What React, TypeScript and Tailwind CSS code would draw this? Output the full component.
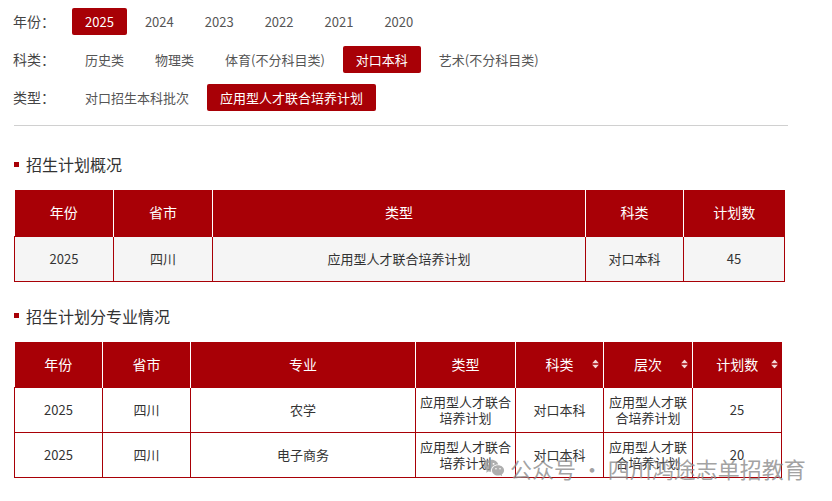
import { RiWechatFill } from "react-icons/ri";

const RED = "bg-[#a80006]";

const filters = [
  {
    label: "年份：",
    items: ["2025", "2024", "2023", "2022", "2021", "2020"],
    active: "2025",
  },
  {
    label: "科类：",
    items: ["历史类", "物理类", "体育(不分科目类)", "对口本科", "艺术(不分科目类)"],
    active: "对口本科",
  },
  {
    label: "类型：",
    items: ["对口招生本科批次", "应用型人才联合培养计划"],
    active: "应用型人才联合培养计划",
  },
];

const SortIcon = () => (
  <span className="absolute right-[4px] top-1/2 -translate-y-1/2 flex flex-col items-center gap-[1px]">
    <svg width="7" height="4" viewBox="0 0 7 4">
      <path d="M3.5 0 L7 4 L0 4 Z" fill="#f3d6d6" />
    </svg>
    <svg width="7" height="4" viewBox="0 0 7 4">
      <path d="M0 0 L7 0 L3.5 4 Z" fill="#f3d6d6" />
    </svg>
  </span>
);

const SectionTitle = ({ text, className }: { text: string; className: string }) => (
  <div className={`flex items-center pl-[14px] ${className}`}>
    <span className="w-[5px] h-[5px] bg-[#a80006] mr-[7px]" />
    <span className="text-[16px] leading-[24px] text-[#333]">{text}</span>
  </div>
);

const summaryCols = [
  { title: "年份", w: 99 },
  { title: "省市", w: 99 },
  { title: "类型", w: 373 },
  { title: "科类", w: 98 },
  { title: "计划数", w: 101 },
];

const majorCols = [
  { title: "年份", w: 88, sort: false },
  { title: "省市", w: 88, sort: false },
  { title: "专业", w: 225, sort: false },
  { title: "类型", w: 100, sort: false },
  { title: "科类", w: 88, sort: true },
  { title: "层次", w: 89, sort: true },
  { title: "计划数", w: 89, sort: true },
];

const majorRows = [
  ["2025", "四川", "农学", "应用型人才联合培养计划", "对口本科", "应用型人才联合培养计划", "25"],
  ["2025", "四川", "电子商务", "应用型人才联合培养计划", "对口本科", "应用型人才联合培养计划", "20"],
];

export default function App() {
  return (
    <div
      className="relative w-[832px] h-[501px] overflow-hidden bg-white"
      style={{ fontFamily: '"Noto Sans CJK SC", "Noto Sans", sans-serif' }}
    >
      {/* Filters */}
      <div className="pt-[8px] flex flex-col gap-[11px]">
        {filters.map((f) => (
          <div key={f.label} className="flex items-center pl-[13px] h-[27px]">
            <span className="w-[59px] text-[14px] text-[#444]">{f.label}</span>
            <div className="flex gap-[5px]">
              {f.items.map((it) => (
                <span
                  key={it}
                  className={
                    it === f.active
                      ? `${RED} text-white rounded-[2px] px-[13px] h-[27px] leading-[27px] text-[13px]`
                      : "text-[#555] px-[13px] h-[27px] leading-[27px] text-[13px]"
                  }
                >
                  {it}
                </span>
              ))}
            </div>
          </div>
        ))}
      </div>

      <div className="ml-[14px] mt-[14px] w-[774px] h-px bg-[#d0d0d0]" />

      <SectionTitle text="招生计划概况" className="mt-[26px] mb-[14px]" />

      <table className="ml-[14px] w-[770px] table-fixed border-collapse text-center">
        <colgroup>
          {summaryCols.map((c) => (
            <col key={c.title} style={{ width: c.w }} />
          ))}
        </colgroup>
        <thead>
          <tr className={`${RED} h-[46px]`}>
            {summaryCols.map((c, i) => (
              <th
                key={c.title}
                className={`font-normal text-[14px] text-white ${i > 0 ? "border-l border-white" : ""}`}
              >
                {c.title}
              </th>
            ))}
          </tr>
        </thead>
        <tbody>
          <tr className="h-[45px] bg-[#f5f5f5] text-[13px] text-[#333]">
            {["2025", "四川", "应用型人才联合培养计划", "对口本科", "45"].map((v, i) => (
              <td key={i} className="border border-[#a80006]">
                {v}
              </td>
            ))}
          </tr>
        </tbody>
      </table>

      <SectionTitle text="招生计划分专业情况" className="mt-[22px] mb-[14px]" />

      <table className="ml-[14px] w-[767px] table-fixed border-collapse text-center">
        <colgroup>
          {majorCols.map((c) => (
            <col key={c.title} style={{ width: c.w }} />
          ))}
        </colgroup>
        <thead>
          <tr className={`${RED} h-[46px]`}>
            {majorCols.map((c, i) => (
              <th
                key={c.title}
                className={`relative font-normal text-[14px] text-white ${i > 0 ? "border-l border-white" : ""}`}
              >
                {c.title}
                {c.sort && <SortIcon />}
              </th>
            ))}
          </tr>
        </thead>
        <tbody>
          {majorRows.map((r, ri) => (
            <tr key={ri} className="h-[45px] bg-white text-[13px] text-[#333]">
              {r.map((v, i) => (
                <td
                  key={i}
                  className={`border border-[#a80006] leading-[16px] ${i === 3 ? "px-[2px]" : "px-[5px]"}`}
                >
                  {v}
                </td>
              ))}
            </tr>
          ))}
        </tbody>
      </table>

      {/* Watermark */}
      <div className="absolute left-[483px] top-[454px] flex items-center gap-[5px] text-[#8a8a8a]/80 pointer-events-none">
        <RiWechatFill className="w-[22px] h-[22px] text-[#9a9a9a]/80" />
        <span className="text-[22px] leading-[28px]">公众号 · 四川鸿途志单招教育</span>
      </div>
    </div>
  );
}
